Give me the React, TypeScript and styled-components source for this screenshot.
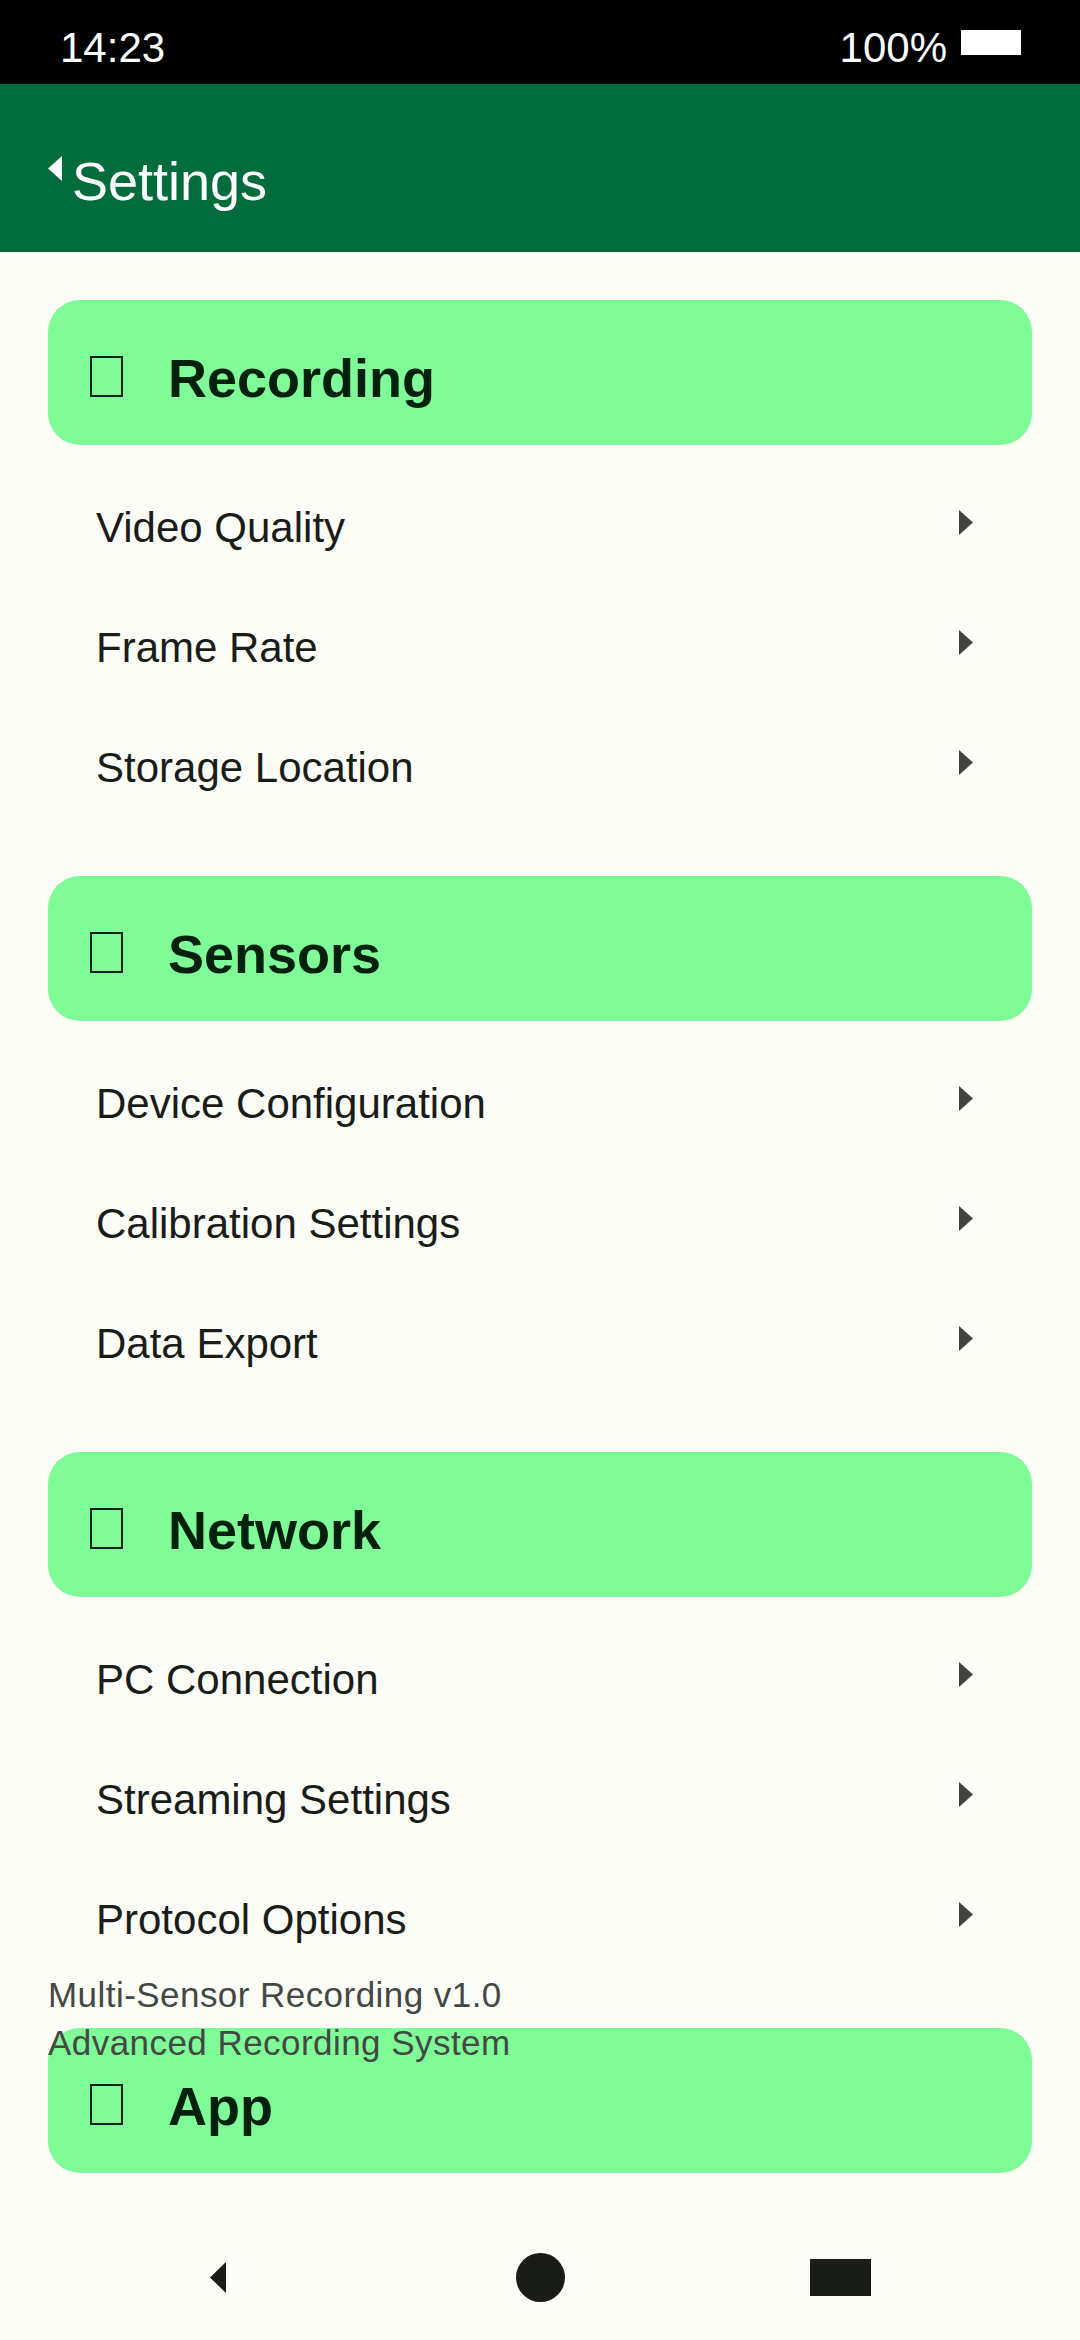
import styled, { createGlobalStyle } from 'styled-components';

const GlobalStyle = createGlobalStyle`
  body {
    margin: 0;
    background: #fcfdf7;
    font-family: 'Liberation Sans', Arial, sans-serif;
  }
`;

const Screen = styled.div`
  display: flex;
  flex-direction: column;
  width: 1080px;
  height: 2340px;
  overflow: hidden;
  background: #fcfdf7;
`;

const StatusBar = styled.div`
  display: flex;
  align-items: center;
  justify-content: space-between;
  height: 84px;
  padding: 0 59px 0 60px;
  background: #000;
  color: #fff;
  font-size: 42px;
  flex-shrink: 0;

  .txt {
    line-height: 42px;
    padding-top: 12px;
  }
`;

const StatusRight = styled.div`
  display: flex;
  align-items: center;
  gap: 14px;
`;

const Battery = styled.div`
  width: 60px;
  height: 25px;
  background: #fff;
`;

const AppBar = styled.header`
  display: flex;
  align-items: center;
  gap: 10px;
  height: 168px;
  padding-left: 48px;
  background: #026c3c;
  color: #fff;
  flex-shrink: 0;
`;

const AppTitle = styled.h1`
  margin: 0;
  padding-top: 26px;
  font-size: 54px;
  line-height: 54px;
  font-weight: 400;
`;

const Content = styled.main`
  position: relative;
  flex: 1;
  overflow: hidden;
  padding-top: 48px;
`;

const Section = styled.section`
  margin-bottom: 48px;
`;

const SectionHeader = styled.div`
  display: flex;
  align-items: center;
  gap: 45px;
  height: 145px;
  margin: 0 48px;
  padding-left: 42px;
  border-radius: 32px;
  background: #7ffc98;
  color: #00210e;
`;

const Tofu = styled.span`
  box-sizing: border-box;
  width: 33px;
  height: 41px;
  margin-top: 8px;
  border: 2px solid #00210e;
`;

const SectionTitle = styled.h2`
  margin: 0;
  padding-top: 11px;
  font-size: 54px;
  line-height: 54px;
  font-weight: 700;
`;

const Rows = styled.div`
  margin-top: 23px;
`;

const Row = styled.div`
  display: flex;
  align-items: center;
  justify-content: space-between;
  height: 120px;
  margin: 0 48px;
  padding: 0 59px 0 48px;
  color: #1a1c18;
  font-size: 42px;

  svg {
    margin-bottom: 11px;
  }
`;

const Footer = styled.div`
  position: absolute;
  left: 48px;
  bottom: 147px;
  color: #444844;
  font-size: 35px;
  line-height: 48px;
  letter-spacing: 0.45px;
`;

const NavBar = styled.nav`
  display: flex;
  align-items: center;
  height: 126px;
  padding-left: 210px;
  background: #fcfdf7;
  flex-shrink: 0;
`;

const NavItem = styled.div<{ $offset: number }>`
  display: flex;
  margin-left: ${(p) => p.$offset}px;
`;

const HomeDot = styled.div`
  width: 49px;
  height: 49px;
  border-radius: 50%;
  background: #1a1c18;
`;

const RecentSquare = styled.div`
  width: 61px;
  height: 37px;
  background: #1a1c18;
`;

const sections = [
  { title: 'Recording', items: ['Video Quality', 'Frame Rate', 'Storage Location'] },
  { title: 'Sensors', items: ['Device Configuration', 'Calibration Settings', 'Data Export'] },
  { title: 'Network', items: ['PC Connection', 'Streaming Settings', 'Protocol Options'] },
  { title: 'App', items: [] as string[] },
];

const Chevron = () => (
  <svg width='14' height='25' viewBox='0 0 14 25'>
    <path d='M0 0 L14 12.5 L0 25 Z' fill='#404540' />
  </svg>
);

function App() {
  return (
    <Screen>
      <GlobalStyle />
      <StatusBar>
        <span className='txt'>14:23</span>
        <StatusRight>
          <span className='txt'>100%</span>
          <Battery />
        </StatusRight>
      </StatusBar>
      <AppBar>
        <svg width='14' height='25' viewBox='0 0 14 25'>
          <path d='M14 0 L0 12.5 L14 25 Z' fill='#fff' />
        </svg>
        <AppTitle>Settings</AppTitle>
      </AppBar>
      <Content>
        {sections.map((s) => (
          <Section key={s.title}>
            <SectionHeader>
              <Tofu />
              <SectionTitle>{s.title}</SectionTitle>
            </SectionHeader>
            {s.items.length > 0 && (
              <Rows>
                {s.items.map((item) => (
                  <Row key={item}>
                    <span>{item}</span>
                    <Chevron />
                  </Row>
                ))}
              </Rows>
            )}
          </Section>
        ))}
        <Footer>
          <div>Multi-Sensor Recording v1.0</div>
          <div>Advanced Recording System</div>
        </Footer>
      </Content>
      <NavBar>
        <NavItem $offset={0}>
          <svg width='16' height='31' viewBox='0 0 16 31'>
            <path d='M16 0 L0 15.5 L16 31 Z' fill='#1a1c18' />
          </svg>
        </NavItem>
        <NavItem $offset={290}>
          <HomeDot />
        </NavItem>
        <NavItem $offset={245}>
          <RecentSquare />
        </NavItem>
      </NavBar>
    </Screen>
  );
}

export default App;
